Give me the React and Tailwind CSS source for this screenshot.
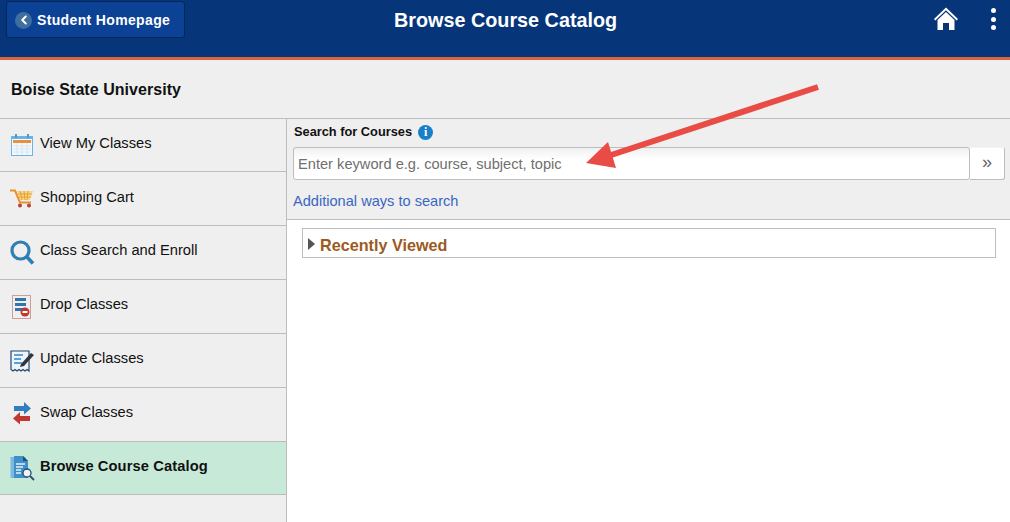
import { ChevronLeft } from 'lucide-react';

function CalendarIcon() {
  return (
    <svg width="24" height="24" viewBox="0 0 24 24">
      <rect x="1.5" y="3.5" width="21" height="19" fill="#f4f9fd" stroke="#6db3e6" />
      <rect x="2" y="3" width="20" height="3" fill="#6db3e6" />
      <rect x="3" y="7" width="18" height="3" fill="#e8903a" />
      <path d="M3 13h18M3 16h18M3 19h18M7 10v12M12 10v12M17 10v12" stroke="#d5e6f3" strokeWidth="1" />
      <rect x="5" y="1" width="2" height="4" fill="#4a9ad6" />
      <rect x="17" y="1" width="2" height="4" fill="#4a9ad6" />
    </svg>
  );
}

function CartIcon() {
  return (
    <svg width="24" height="19" viewBox="0 0 24 19">
      <path d="M0 1.500h5l5 12h11" fill="none" stroke="#e8902e" strokeWidth="2" />
      <path d="M7 2h16l-3 9H10z" fill="#f6d58c" />
      <path d="M10 2l2 9M14 2l1 9M18 2l-1 9M8 5h14M9 8h12" stroke="#e8a030" strokeWidth="1" />
      <circle cx="10" cy="16.500" r="2" fill="#b8403a" />
      <circle cx="19" cy="16.500" r="2" fill="#b8403a" />
    </svg>
  );
}

function SearchIcon() {
  return (
    <svg width="25" height="25" viewBox="0 0 25 25">
      <circle cx="10.5" cy="10.5" r="8.5" fill="none" stroke="#2f7fb5" strokeWidth="3.2" />
      <path d="M16.5 16.5l6.5 7" stroke="#2f7fb5" strokeWidth="3.6" />
    </svg>
  );
}

function DropIcon() {
  return (
    <svg width="20" height="24" viewBox="0 0 20 24">
      <rect x="0.5" y="0.5" width="18" height="23" fill="none" stroke="#b04a45" strokeWidth="1" strokeDasharray="1 1" />
      <path d="M3 4.500h11M3 9.500h11M3 14.500h8" stroke="#2f76ad" strokeWidth="3" />
      <circle cx="13" cy="17" r="4.500" fill="#c0392f" />
      <rect x="10.500" y="16" width="5" height="2" fill="#fff" />
    </svg>
  );
}

function UpdateIcon() {
  return (
    <svg width="25" height="24" viewBox="0 0 25 24">
      <path d="M1 2h18v20l-2-1.500-2 1.500-2-1.500-2 1.500-2-1.500-2 1.500-2-1.500-2 1.500-2-1.500z" fill="#eef4f9" stroke="#24466b" strokeWidth="1.2" />
      <path d="M4 6h9M4 10h7M4 14h8" stroke="#5aa3d8" strokeWidth="2" />
      <path d="M11 15l10-11 3 2-10 11-4 1z" fill="#2e3640" />
    </svg>
  );
}

function SwapIcon() {
  return (
    <svg width="20" height="25" viewBox="0 0 20 25">
      <path d="M2 4h10V0l7 6.500-7 6V9H2z" fill="#2f7fc0" />
      <path d="M18 14H8v-4l-7 6.500 7 6V19h10z" fill="#c0392f" />
    </svg>
  );
}

function CatalogIcon() {
  return (
    <svg width="25" height="26" viewBox="0 0 25 26">
      <rect x="0.500" y="2" width="15" height="21" fill="#7db8e0" />
      <path d="M4 1h9l5 5v17H4z" fill="#3f8fc9" />
      <path d="M13 1l5 5h-5z" fill="#1f4f78" />
      <path d="M6 9h9M6 12h7M6 15h5M6 18h5" stroke="#e6f2fa" strokeWidth="1.500" />
      <circle cx="17" cy="18" r="4" fill="#eaf4fb" stroke="#2b4c6b" strokeWidth="1.300" />
      <path d="M20 21l4 4" stroke="#2b4c6b" strokeWidth="1.800" />
    </svg>
  );
}

const menuItems = [
  { icon: CalendarIcon, label: 'View My Classes', row: 'h-[53px]', text: 'mb-[4px]' },
  { icon: CartIcon, label: 'Shopping Cart', row: 'h-[54px]', text: 'mb-[4px]' },
  { icon: SearchIcon, label: 'Class Search and Enroll', row: 'h-[54px]', text: 'mb-[6px]' },
  { icon: DropIcon, label: 'Drop Classes', row: 'h-[54px]', text: 'mb-[6px]' },
  { icon: UpdateIcon, label: 'Update Classes', row: 'h-[54px]', text: 'mb-[6px]' },
  { icon: SwapIcon, label: 'Swap Classes', row: 'h-[54px]', text: 'mb-[6px]' },
  { icon: CatalogIcon, label: 'Browse Course Catalog', row: 'h-[53px] bg-[#c7ead8] font-bold', text: 'mb-[4px] tracking-[0.1px]' },
];

export default function App() {
  return (
    <div className="relative h-[522px] w-[1010px] overflow-hidden bg-white font-['Liberation_Sans',Arial,sans-serif] text-[#111]">
      {/* Banner */}
      <header className="flex h-[60px] items-start border-b-[3px] border-[#d9643f] bg-[#06357a] pl-[6px] pr-[14px]">
        <button className="mt-[1px] flex h-[37px] w-[179px] items-center gap-[5px] rounded-[3px] border border-[#04265c] bg-[#0b4296] pl-[8px] pt-[1px] text-[14px] font-bold tracking-[0.35px] text-white">
          <span className="flex h-[17px] w-[17px] items-center justify-center rounded-full bg-[#3f6f9f]">
            <ChevronLeft size={14} strokeWidth={3.5} className="text-white" />
          </span>
          Student Homepage
        </button>
        <h1 className="ml-[209px] mt-[8px] text-[19.800px] font-bold leading-[24px] text-white">Browse Course Catalog</h1>
        <div className="ml-auto mt-[7px] flex items-start gap-[33px]">
          <svg width="24" height="24" viewBox="0 0 24 24" fill="white">
            <path d="M12 0.500 0 12l1.300 1.400L12 3.300l10.700 10.100L24 12z" />
            <path d="M3.500 13 12 5l8.500 8v10H15v-7H9v7H3.500z" />
          </svg>
          <div className="mt-[1px] flex flex-col gap-[3.500px]">
            <span className="h-[5px] w-[5px] rounded-full bg-white" />
            <span className="h-[5px] w-[5px] rounded-full bg-white" />
            <span className="h-[5px] w-[5px] rounded-full bg-white" />
          </div>
        </div>
      </header>

      {/* Institution title */}
      <div className="flex h-[59px] items-center border-b border-[#bdbdbd] bg-[#efefef] pl-[11px] pt-[1px] text-[16px] font-bold tracking-[0.05px]">
        Boise State University
      </div>

      <div className="flex h-[403px]">
        {/* Side nav */}
        <nav className="w-[287px] shrink-0 border-r border-[#bdbdbd] bg-[#efefef]">
          {menuItems.map((item) => (
            <div key={item.label} className={`flex items-center border-b border-[#bdbdbd] ${item.row}`}>
              <span className="flex w-[40px] shrink-0 items-center justify-center pl-[4px]">
                <item.icon />
              </span>
              <span className={`text-[14.700px] leading-[18px] ${item.text}`}>{item.label}</span>
            </div>
          ))}
        </nav>

        {/* Content */}
        <main className="flex-1">
          <section className="h-[101px] border-b border-[#bdbdbd] bg-[#efefef] pl-[6px] pr-[5px] pt-[5px]">
            <div className="flex h-[16px] items-center gap-[6px] pl-[1px] text-[12.800px] font-bold">
              Search for Courses
              <span className="flex h-[15px] w-[15px] items-center justify-center rounded-full bg-[#1a7fc9] font-['Liberation_Serif',serif] text-[12px] font-bold text-white">i</span>
            </div>
            <div className="mt-[7px] flex h-[33px]">
              <div className="flex flex-1 items-center rounded-[3px] border border-[#bdbdbd] bg-gradient-to-b from-[#f0f0f0] to-white to-[35%] pl-[4px] pt-[3px] text-[14.650px] text-[#6f6f6f]">
                Enter keyword e.g. course, subject, topic
              </div>
              <div className="flex w-[35px] items-center justify-center rounded-r-[3px] border border-l-0 border-[#bdbdbd] border-t-[#f4f4f4] bg-white pb-[4px] text-[18px] leading-none text-[#666]">
                »
              </div>
            </div>
            <a className="mt-[12px] block text-[14.600px] leading-[18px] text-[#3a66c4]">Additional ways to search</a>
          </section>
          <div className="pl-[15px] pr-[14px] pt-[8px]">
            <div className="flex h-[30px] items-center gap-[5px] border border-[#bdbdbd] pl-[5px] pt-[5px] text-[16.200px] font-bold text-[#9c5a1e]">
              <span className="mb-[3px] h-0 w-0 border-y-[6px] border-l-[7px] border-y-transparent border-l-[#555]" />
              Recently Viewed
            </div>
          </div>
        </main>
      </div>

      {/* Annotation arrow */}
      <svg className="absolute left-0 top-0" width="1010" height="522" viewBox="0 0 1010 522">
        <path d="M818 87 605 157" stroke="#e84c45" strokeWidth="6" />
        <path d="M586 163 608 142 616 168z" fill="#e84c45" />
      </svg>
    </div>
  );
}
